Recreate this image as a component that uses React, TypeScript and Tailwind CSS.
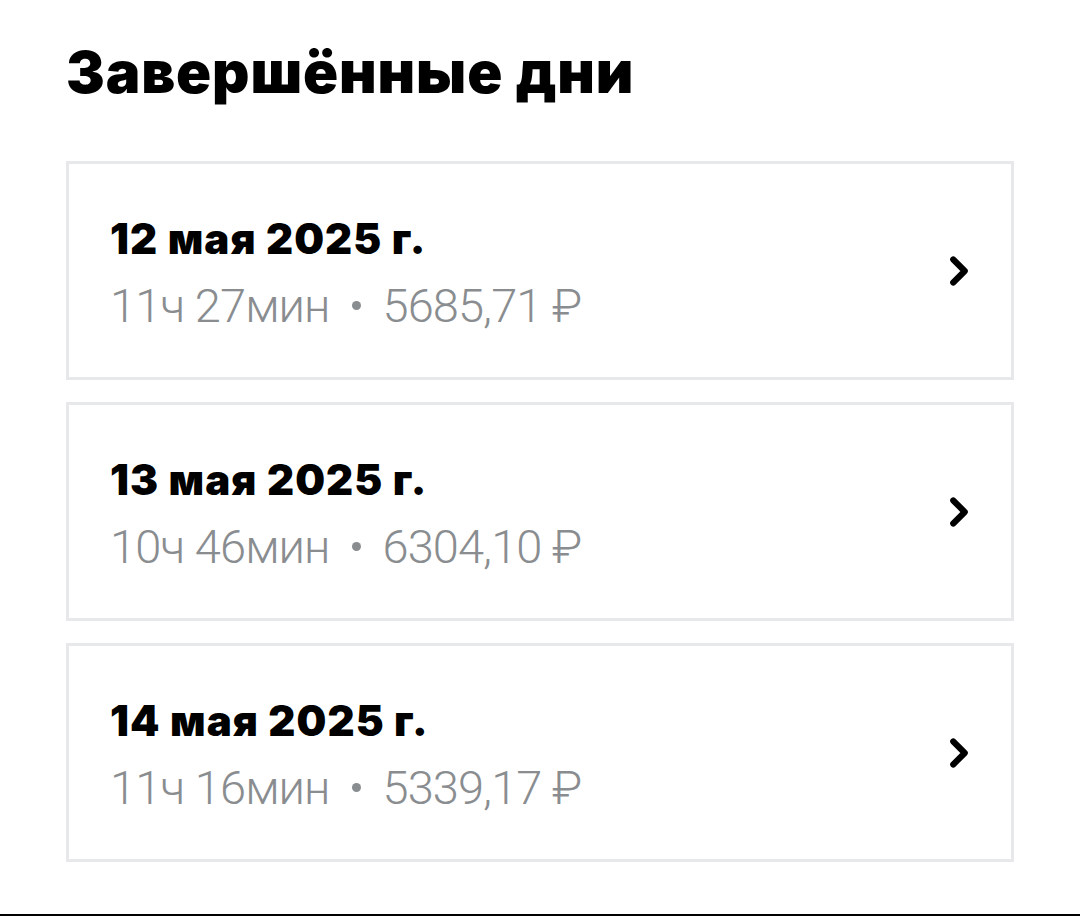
import { ChevronRight } from 'lucide-react'

const days = [
  { date: '12 мая 2025 г.', time: '11ч 27мин', sum: '5685,71 ₽' },
  { date: '13 мая 2025 г.', time: '10ч 46мин', sum: '6304,10 ₽' },
  { date: '14 мая 2025 г.', time: '11ч 16мин', sum: '5339,17 ₽' },
]

function DayCard({ date, time, sum }: { date: string; time: string; sum: string }) {
  return (
    <div className="flex h-[219px] items-center justify-between border-[3px] border-[#e6e8e9] bg-white pl-[41px] pr-[29px]">
      <div className="flex flex-col pt-[4px]">
        <p className="font-['Inter',sans-serif] text-[42px] font-black leading-[52px] tracking-[0.025em] text-black">
          {date}
        </p>
        <p className="mt-[14px] flex items-center font-['Roboto',sans-serif] text-[47px] font-light leading-[54px] tracking-[-0.02em] text-[#8a8d90]">
          <span>{time}</span>
          <span className="mx-[22px] h-[9px] w-[9px] rounded-full bg-[#8a8d90]" />
          <span>{sum}</span>
        </p>
      </div>
      <ChevronRight className="h-[46px] w-[46px] text-black" strokeWidth={3.2} />
    </div>
  )
}

export default function App() {
  return (
    <div className="flex h-[916px] w-[1080px] flex-col border-b-2 border-black bg-white px-[66px] pt-[37px]">
      <h1 className="font-['Inter',sans-serif] text-[58px] font-black leading-[70px] tracking-[0.015em] text-black">
        Завершённые дни
      </h1>
      <div className="mt-[54px] flex flex-col gap-[22px]">
        {days.map((d) => (
          <DayCard key={d.date} {...d} />
        ))}
      </div>
    </div>
  )
}
